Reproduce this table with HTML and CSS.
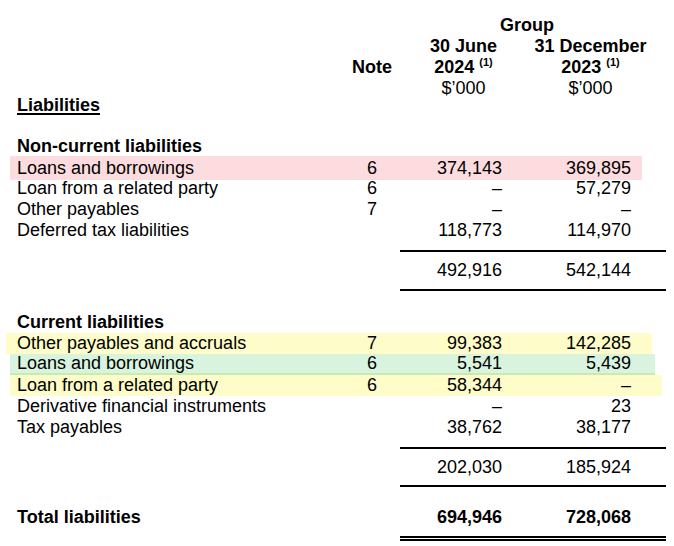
FILE: index.html
```html
<!DOCTYPE html>
<html>
<head>
<meta charset="utf-8">
<link rel="stylesheet" href="styles.css">
</head>
<body>
<div class="sheet">
  <div class="row head group-row"><span></span><span></span><span class="group">Group</span></div>
  <div class="row head"><span></span><span></span><span class="c1">30 June</span><span class="c2">31 December</span></div>
  <div class="row head"><span></span><span class="note">Note</span><span class="c1">2024 <sup>(1)</sup></span><span class="c2">2023 <sup>(1)</sup></span></div>
  <div class="row head normal"><span></span><span></span><span class="c1">$’000</span><span class="c2">$’000</span></div>

  <div class="row title"><span class="lbl"><u>Liabilities</u></span></div>

  <div class="row section gap1"><span class="lbl">Non-current liabilities</span></div>
  <div class="row hl pink"><span class="lbl">Loans and borrowings</span><span class="note">6</span><span class="c1">374,143</span><span class="c2">369,895</span></div>
  <div class="row"><span class="lbl">Loan from a related party</span><span class="note">6</span><span class="c1">–</span><span class="c2">57,279</span></div>
  <div class="row"><span class="lbl">Other payables</span><span class="note">7</span><span class="c1">–</span><span class="c2">–</span></div>
  <div class="row"><span class="lbl">Deferred tax liabilities</span><span class="note"></span><span class="c1">118,773</span><span class="c2">114,970</span></div>
  <div class="subtotal sub1"><span class="c1">492,916</span><span class="c2">542,144</span></div>

  <div class="row section gap2"><span class="lbl">Current liabilities</span></div>
  <div class="row hl yellow1"><span class="lbl">Other payables and accruals</span><span class="note">7</span><span class="c1">99,383</span><span class="c2">142,285</span></div>
  <div class="row hl green"><span class="lbl">Loans and borrowings</span><span class="note">6</span><span class="c1">5,541</span><span class="c2">5,439</span></div>
  <div class="row hl yellow2"><span class="lbl">Loan from a related party</span><span class="note">6</span><span class="c1">58,344</span><span class="c2">–</span></div>
  <div class="row"><span class="lbl">Derivative financial instruments</span><span class="note"></span><span class="c1">–</span><span class="c2">23</span></div>
  <div class="row"><span class="lbl">Tax payables</span><span class="note"></span><span class="c1">38,762</span><span class="c2">38,177</span></div>
  <div class="subtotal sub2"><span class="c1">202,030</span><span class="c2">185,924</span></div>

  <div class="row total"><span class="lbl">Total liabilities</span><span class="note"></span><span class="c1">694,946</span><span class="c2">728,068</span></div>
  <div class="dbl"></div>
</div>
</body>
</html>
```
FILE: styles.css
```css
html, body {
  margin: 0;
  padding: 0;
  background: #ffffff;
}
body {
  font-family: "Liberation Sans", Arial, sans-serif;
  font-size: 18px;
  color: #000;
}
.sheet {
  width: 674px;
  padding-top: 15px;
}
.row {
  display: grid;
  grid-template-columns: 330px 50px 105px 129px;
  height: 21px;
  line-height: 21px;
  padding-left: 17px;
  white-space: nowrap;
}
.note { text-align: center; }
.c1, .c2 { text-align: right; }

.head {
  font-weight: bold;
  grid-template-columns: 330px 50px 105px 170px;
}
.head.normal { font-weight: normal; }
.group-row { grid-template-columns: 330px 50px 260px; }
.group { text-align: center; }
.head .c1 { padding-left: 28px; text-align: center; }
.head .c2 { padding-left: 7px; text-align: center; }
sup {
  font-size: 11px;
  line-height: 0;
  vertical-align: 7px;
}
.title {
  font-weight: bold;
  margin-top: -4px;
}
.title u {
  text-decoration-thickness: 2px;
  text-underline-offset: 2px;
}
.section { font-weight: bold; }
.gap1 { margin-top: 20px; }
.gap2 { margin-top: 21px; }

.pink {
  background: #fcdcdf;
  margin-left: 10px;
  padding-left: 7px;
  width: 625px;
  height: 24px;
  line-height: 24px;
  margin-top: -1px;
  margin-bottom: -2px;
}
.yellow1 {
  background: #fefcc8;
  margin-left: 6px;
  padding-left: 11px;
  width: 635px;
}
.green {
  background: #d8f4df;
  margin-left: 10px;
  padding-left: 7px;
  width: 638px;
  border-bottom: 2px solid #c8ebb0;
  height: 19px;
  line-height: 19px;
}
.yellow2 {
  background: #fefcc8;
  margin-left: 10px;
  padding-left: 7px;
  width: 645px;
}

.subtotal {
  display: grid;
  grid-template-columns: 102px 129px;
  margin-left: 400px;
  width: 266px;
  border-top: 2px solid #000;
  border-bottom: 2px solid #000;
}
.sub1 {
  margin-top: 9px;
  height: 37px;
  line-height: 37px;
}
.sub2 {
  margin-top: 9px;
  height: 36px;
  line-height: 36px;
}
.total {
  margin-top: 20px;
  font-weight: bold;
}
.dbl {
  margin-left: 400px;
  width: 266px;
  margin-top: 8px;
  height: 1px;
  border-top: 2px solid #000;
  border-bottom: 2px solid #000;
}
```
